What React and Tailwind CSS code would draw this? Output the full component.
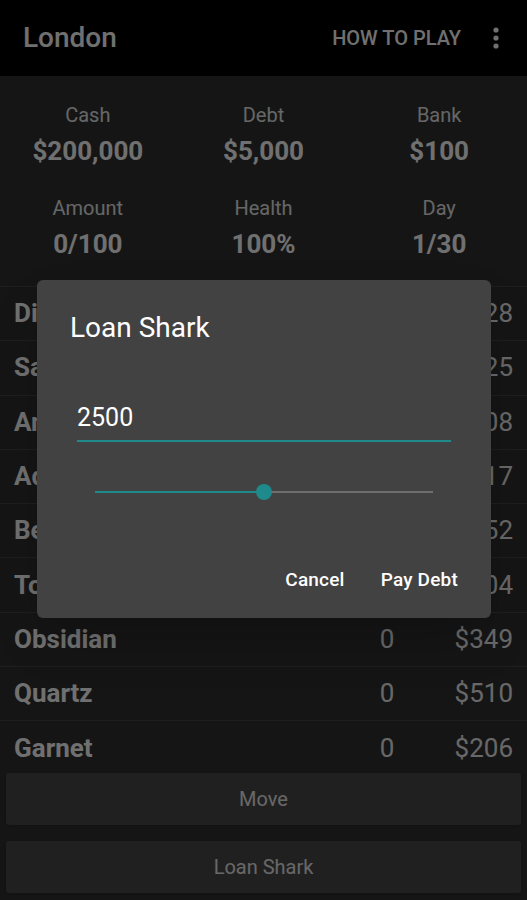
import { useState } from "react";

const stats = [
  { label: "Cash", value: "$200,000" },
  { label: "Debt", value: "$5,000" },
  { label: "Bank", value: "$100" },
  { label: "Amount", value: "0/100" },
  { label: "Health", value: "100%" },
  { label: "Day", value: "1/30" },
];

const items = [
  { name: "Diamond", qty: 0, price: "$728" },
  { name: "Sapphire", qty: 0, price: "$425" },
  { name: "Amethyst", qty: 0, price: "$108" },
  { name: "Aquamarine", qty: 0, price: "$617" },
  { name: "Beryl", qty: 0, price: "$252" },
  { name: "Topaz", qty: 0, price: "$404" },
  { name: "Obsidian", qty: 0, price: "$349" },
  { name: "Quartz", qty: 0, price: "$510" },
  { name: "Garnet", qty: 0, price: "$206" },
];

export default function App() {
  const [amount, setAmount] = useState(2500);
  const pct = (amount / 5000) * 100;

  return (
    <div className="relative h-[900px] w-full overflow-hidden bg-[#303030] font-['Roboto',sans-serif] text-white">
      {/* Toolbar */}
      <div className="flex h-[76px] items-center bg-black pl-[23px] pr-[28px]">
        <h1 className="text-[28px] font-medium leading-none">London</h1>
        <span className="ml-auto text-[20px] font-medium leading-none">HOW TO PLAY</span>
        <svg className="ml-[32px]" width="6" height="22" viewBox="0 0 6 22">
          <circle cx="3" cy="3" r="2.6" fill="white" />
          <circle cx="3" cy="11" r="2.6" fill="white" />
          <circle cx="3" cy="19" r="2.6" fill="white" />
        </svg>
      </div>

      {/* Stats */}
      <div className="grid grid-cols-3 gap-y-[30px] pt-[27px] pb-[27px]">
        {stats.map((s) => (
          <div key={s.label} className="flex flex-col items-center">
            <span className="text-[20px] leading-[24px] text-[#e8e8e8]">{s.label}</span>
            <span className="mt-[9px] text-[26px] font-bold leading-[30px]">{s.value}</span>
          </div>
        ))}
      </div>

      {/* Items */}
      <div className="h-[480px] overflow-hidden border-t border-[#454545]">
        {items.map((it) => (
          <div
            key={it.name}
            className="flex h-[54.3px] items-center border-b border-[#454545] px-[14px] text-[26px]"
          >
            <span className="flex-1 font-bold">{it.name}</span>
            <span className="w-[52px] text-center text-[#ececec]">{it.qty}</span>
            <span className="w-[100px] text-right text-[#ececec]">{it.price}</span>
          </div>
        ))}
      </div>

      {/* Actions */}
      <div className="flex flex-col gap-[16px] px-[6px] pt-[7px]">
        <button className="h-[52px] rounded-[3px] bg-[#4a4a4a] text-[20px] text-[#ececec] shadow">
          Move
        </button>
        <button className="h-[52px] rounded-[3px] bg-[#4a4a4a] text-[20px] text-[#ececec] shadow">
          Loan Shark
        </button>
      </div>

      {/* Scrim */}
      <div className="absolute inset-0 bg-black/[0.56]" />

      {/* Dialog */}
      <div className="absolute left-[37px] top-[280px] flex h-[338px] w-[454px] flex-col rounded-[6px] bg-[#424242] px-[33px] shadow-2xl">
        <h2 className="mt-[31px] text-[28px] leading-[34px]">Loan Shark</h2>
        <div className="mx-[7px] mt-[58px] text-[25px] leading-[30px]">{amount}</div>
        <div className="mx-[7px] mt-[7px] h-[2px] bg-[#1e8a8c]" />
        <div className="relative mx-[25px] mt-[42px] flex h-[16px] items-center">
          <div className="h-[2px] bg-[#1e8a8c]" style={{ width: `${pct}%` }} />
          <div className="h-[2px] flex-1 bg-[#6e6e6e]" />
          <div
            className="absolute top-0 h-[16px] w-[16px] -translate-x-1/2 rounded-full bg-[#1e8a8c]"
            style={{ left: `${pct}%` }}
            onClick={() => setAmount(amount)}
          />
        </div>
        <div className="mt-[68px] flex justify-end gap-[36px] text-[19px] font-medium leading-[24px] tracking-[0.2px]">
          <button>Cancel</button>
          <button>Pay Debt</button>
        </div>
      </div>
    </div>
  );
}
